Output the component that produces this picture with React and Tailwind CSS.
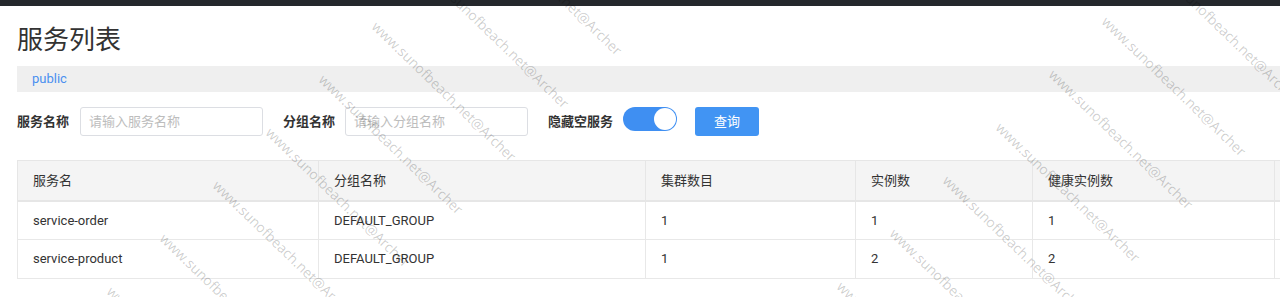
const WM = "www.sunofbeach.net@Archer";

const marks = [];
for (const [x0, y0] of [
  [379, 19],
  [1109, 14],
]) {
  for (let k = -2; k <= 5; k++) marks.push([x0 - 53 * k, y0 + 53 * k]);
}

const cols = [
  { w: 301, h: "服务名" },
  { w: 327, h: "分组名称" },
  { w: 210, h: "集群数目" },
  { w: 177, h: "实例数" },
  { w: 242, h: "健康实例数" },
  { w: 220, h: "" },
];

const rows = [
  ["service-order", "DEFAULT_GROUP", "1", "1", "1", ""],
  ["service-product", "DEFAULT_GROUP", "1", "2", "2", ""],
];

function Label({ children }) {
  return (
    <span className="text-[13px] font-bold leading-[29px] text-[#333] whitespace-nowrap">
      {children}
    </span>
  );
}

function Input({ placeholder }) {
  return (
    <div className="flex h-[29px] w-[183px] items-center rounded-[3px] border border-[#dcdee3] bg-white pl-[8px] text-[13px] text-[#bdbdbd]">
      {placeholder}
    </div>
  );
}

export default function App() {
  return (
    <div className="relative h-[297px] w-full overflow-hidden bg-white font-['Roboto','Noto_Sans_CJK_SC',sans-serif] text-[#333]">
      <div className="h-[6px] bg-[#25282c]" />
      <div className="pl-[17px]">
        <h1 className="mt-[19px] text-[26px] font-normal leading-[26px] text-[#333] font-['Noto_Sans_CJK_SC',sans-serif]">
          服务列表
        </h1>
        <div className="mt-[15px] flex h-[26px] items-center bg-[#efefef] pl-[15px] text-[13px] text-[#4a90f0]">
          public
        </div>
        <div className="mt-[15px] flex h-[29px] items-start">
          <Label>服务名称</Label>
          <div className="ml-[11px]">
            <Input placeholder="请输入服务名称" />
          </div>
          <div className="ml-[20px]">
            <Label>分组名称</Label>
          </div>
          <div className="ml-[10px]">
            <Input placeholder="请输入分组名称" />
          </div>
          <div className="ml-[20px]">
            <Label>隐藏空服务</Label>
          </div>
          <div className="relative ml-[10px] h-[24px] w-[54px] rounded-full bg-[#3f8ff2]">
            <div className="absolute right-[1px] top-[1px] h-[22px] w-[22px] rounded-full bg-white" />
          </div>
          <button className="ml-[18px] flex h-[29px] w-[64px] items-center justify-center rounded-[3px] bg-[#4194f3] text-[13px] text-white">
            查询
          </button>
        </div>
        <table className="mt-[24px] w-[1477px] table-fixed border-collapse text-[13px]">
          <colgroup>
            {cols.map((c, i) => (
              <col key={i} style={{ width: c.w }} />
            ))}
          </colgroup>
          <thead>
            <tr className="h-[40px] bg-[#f4f4f4]">
              {cols.map((c, i) => (
                <th
                  key={i}
                  className="border border-b-2 border-[#e6e6e6] px-[15px] text-left font-normal text-[#333]"
                >
                  {c.h}
                </th>
              ))}
            </tr>
          </thead>
          <tbody>
            {rows.map((r, ri) => (
              <tr key={ri} className="h-[39px]">
                {r.map((v, i) => (
                  <td
                    key={i}
                    className="border border-[#e8e8e8] px-[15px] text-left text-[#333]"
                  >
                    {v}
                  </td>
                ))}
              </tr>
            ))}
          </tbody>
        </table>
      </div>
      <div className="pointer-events-none absolute inset-0">
        {marks.map(([x, y], i) => (
          <span
            key={i}
            className="absolute origin-top-left rotate-[44deg] whitespace-nowrap text-[14px] leading-[14px] text-[rgba(0,0,0,0.2)] font-['Open_Sans',sans-serif]"
            style={{ left: x, top: y }}
          >
            {WM}
          </span>
        ))}
      </div>
    </div>
  );
}
